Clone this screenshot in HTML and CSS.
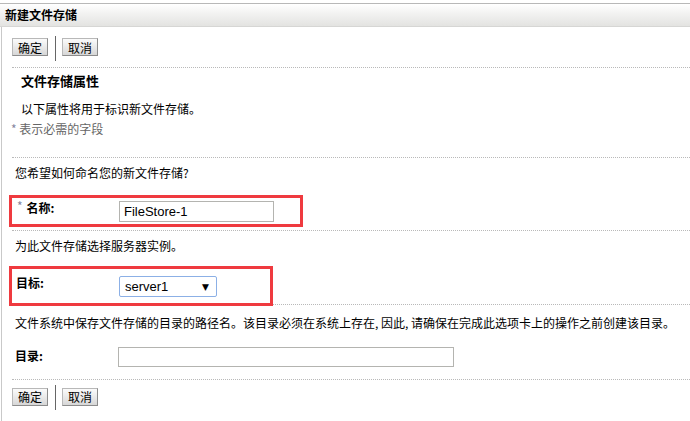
FILE: index.html
```html
<!DOCTYPE html>
<html lang="zh-CN">
<head>
<meta charset="utf-8">
<title>新建文件存储</title>
<link rel="stylesheet" href="styles.css">
</head>
<body>
<div class="page">
  <div class="header">新建文件存储</div>
  <div class="content">
    <div class="btnbar">
      <button class="btn">确定</button><span class="sep"></span><button class="btn">取消</button>
    </div>
    <div class="rule"></div>
    <div class="intro">
      <h2 class="sectitle">文件存储属性</h2>
      <p class="desc">以下属性将用于标识新文件存储。</p>
      <p class="req"><span class="ast">*</span> 表示必需的字段</p>
    </div>
    <div class="rule"></div>
    <p class="prompt">您希望如何命名您的新文件存储?</p>
    <div class="field hl hl-name">
      <label class="lbl lbl-req"><span class="ast">*</span><span class="lbltext">名称:</span></label>
      <input class="text text-name" type="text" value="FileStore-1">
    </div>
    <div class="rule"></div>
    <p class="prompt p2">为此文件存储选择服务器实例。</p>
    <div class="field hl hl-target">
      <label class="lbl">目标:</label>
      <div class="select"><span class="selval">server1</span><span class="arrow">▼</span></div>
    </div>
    <div class="rule rule-under"></div>
    <p class="prompt p3">文件系统中保存文件存储的目录的路径名。该目录必须在系统上存在, 因此, 请确保在完成此选项卡上的操作之前创建该目录。</p>
    <div class="field plain">
      <label class="lbl">目录:</label>
      <input class="text text-dir" type="text" value="">
    </div>
    <div class="rule"></div>
    <div class="btnbar bottom">
      <button class="btn">确定</button><span class="sep"></span><button class="btn">取消</button>
    </div>
  </div>
</div>
</body>
</html>
```

FILE: styles.css
```css
html, body {
  margin: 0;
  padding: 0;
  background: #fff;
}
body {
  font-family: "Noto Sans CJK SC", "Liberation Sans", sans-serif;
  font-size: 12px;
  color: #000;
}
.page {
  padding-top: 3px;
  min-height: 418px;
}
.header {
  height: 22px;
  line-height: 22px;
  border-top: 1px solid #b8b8b8;
  border-bottom: 1px solid #d6d6d4;
  background: linear-gradient(#ffffff, #f3f3f2 40%, #e3e3e1);
  font-weight: bold;
  font-size: 12px;
  padding-left: 5px;
}
.content {
  margin-left: 1px;
  border-left: 1px solid #c9c9c9;
  min-height: 394px;
}
.btnbar {
  height: 40px;
  display: flex;
  align-items: center;
  padding-left: 10px;
}
.btnbar.bottom {
  height: 33px;
}
.btn {
  height: 18px;
  width: 36px;
  padding: 0;
  margin: 0;
  border: 1px solid #8c8c8c;
  border-top-color: #b8b8b8;
  border-left-color: #b8b8b8;
  background: linear-gradient(#fbfbfb, #e6e6e6 60%, #d6d6d6);
  font-family: "Noto Sans CJK SC", sans-serif;
  font-size: 12px;
  line-height: 15px;
  color: #000;
}
.sep {
  width: 1px;
  height: 25px;
  background: #666;
  margin: 2px 6px 0 7px;
}
.rule {
  margin-left: 10px;
  border-top: 1px dotted #b9b9b9;
  height: 0;
}
.intro {
  height: 89px;
  padding-top: 5px;
  box-sizing: border-box;
}
.sectitle {
  margin: 0 0 0 19px;
  font-size: 13px;
  line-height: 16px;
  font-weight: bold;
}
.desc {
  margin: 12px 0 0 19px;
  line-height: 16px;
}
.req {
  margin: 4px 0 0 9px;
  line-height: 16px;
  color: #666;
}
.ast {
  color: #8585a0;
  font-size: 12px;
}
.prompt {
  margin: 7px 0 0 13px;
  line-height: 16px;
  white-space: nowrap;
}
.field {
  display: flex;
  align-items: center;
  box-sizing: border-box;
}
.hl {
  position: relative;
  z-index: 1;
  border: 3px solid #ef3a3f;
  margin-left: 7px;
}
.hl-name {
  margin-top: 14px;
  width: 294px;
  height: 32px;
  margin-bottom: 3px;
  padding-left: 5px;
}
.hl-target {
  margin-top: 12px;
  width: 264px;
  height: 40px;
  padding-left: 4px;
}
.lbl {
  width: 103px;
  font-weight: bold;
  font-size: 12px;
  line-height: 16px;
  flex: none;
  align-self: flex-start;
}
.hl-name .lbl {
  width: 102px;
  margin-top: 2px;
  display: flex;
  align-items: flex-start;
}
.lbl-req .ast {
  font-weight: normal;
  font-size: 12px;
  line-height: 12px;
  margin-right: 4px;
}
.hl-target .lbl {
  margin-top: 6px;
}
.text {
  box-sizing: border-box;
  border: 1px solid #b4b4b0;
  margin: 0;
  padding: 0 0 0 4px;
  font-family: "Liberation Sans", Arial, sans-serif;
  font-size: 13px;
  color: #000;
  background: #fff;
  outline: none;
}
.text-name {
  width: 155px;
  height: 21px;
}
.select {
  box-sizing: border-box;
  width: 98px;
  height: 21px;
  border: 1px solid #8cb0e6;
  border-radius: 2px;
  display: flex;
  align-items: center;
  justify-content: space-between;
  padding: 0 7px 0 5px;
  font-family: "Liberation Sans", Arial, sans-serif;
  font-size: 13px;
  margin-top: 1px;
}
.arrow {
  font-size: 9px;
  font-family: "DejaVu Sans", sans-serif;
}
.rule-under {
  margin-top: -2px;
}
.p3 {
  margin-top: 10px;
}
.plain {
  margin-top: 12px;
  height: 28px;
  padding-left: 13px;
}
.plain .lbl {
  align-self: center;
  margin-top: -2px;
}
.text-dir {
  width: 336px;
  height: 20px;
}
.plain + .rule {
  margin-top: 8px;
}
```
